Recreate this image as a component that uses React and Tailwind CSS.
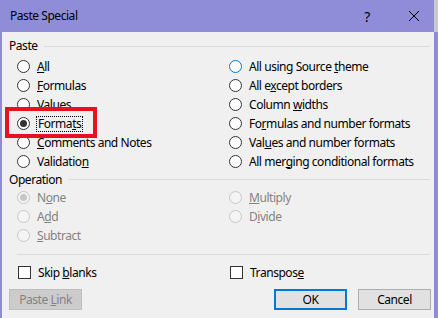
import React from 'react';

const FONT = { fontFamily: '"Noto Sans", "Segoe UI", Arial, sans-serif' };

// label with an access key; k = index of the underlined letter
const Label = ({ text, k, disabled }) => (
    <span className={disabled ? 'text-[#838383]' : 'text-black'}>
        {text.slice(0, k)}
        <span className="underline underline-offset-[1px]">{text[k]}</span>
        {text.slice(k + 1)}
    </span>
);

const Radio = ({ text, k, checked, hover, disabled, focus }) => (
    <div className="h-[19px] flex items-center">
        <span
            className={`w-[13px] h-[13px] rounded-full border flex items-center justify-center shrink-0 ${
                disabled ? 'border-[#c6c6c6] bg-[#f4f4f4]' : hover ? 'border-[#0078d7] bg-white' : 'border-[#333] bg-white'
            }`}
        >
            {checked && (
                <span className={`w-[7px] h-[7px] rounded-full ${disabled ? 'bg-[#c6c6c6]' : 'bg-[#333]'}`} />
            )}
        </span>
        <span className={`ml-[7px] ${focus ? 'outline outline-1 outline-dotted outline-black px-[1px] -ml-[1px] leading-[14px]' : ''}`}>
            <Label text={text} k={k} disabled={disabled} />
        </span>
    </div>
);

const Check = ({ text, k }) => (
    <div className="h-[19px] flex items-center">
        <span className="w-[13px] h-[13px] border border-[#333] bg-white shrink-0" />
        <span className="ml-[7px]">
            <Label text={text} k={k} />
        </span>
    </div>
);

const Header = ({ text, h }) => (
    <div className={`flex items-center pl-[7px] pr-[4px] ${h}`}>
        <span>{text}</span>
        <div className="flex-1 ml-[6px] h-px bg-[#dadada]" />
    </div>
);

export default function App() {
    return (
        <div className="w-[438px] h-[318px] bg-[#c9c9d6] flex flex-col text-[12px] tracking-[-0.45px] text-black relative overflow-hidden" style={FONT}>
            {/* title bar */}
            <div className="h-[32px] bg-[#8f8cd8] flex items-center pl-[10px] shrink-0 mr-[4px]">
                <span className="text-[12px]">Paste Special</span>
                <span className="ml-auto mr-[38px] text-[14px]">?</span>
                <svg className="w-[12px] h-[12px] mr-[14px]" viewBox="0 0 12 12" fill="none" stroke="#000" strokeWidth="1">
                    <path d="M1 1l10 10M11 1L1 11" />
                </svg>
            </div>

            <div className="flex-1 flex bg-[#8f8cd8] pl-[2px] pr-[4px]">
                <div className="flex-1 bg-[#f0f0f0] flex flex-col pt-[4px]">
                    <Header text="Paste" h="h-[20px]" />
                    <div className="grid grid-cols-[212px_1fr] pl-[15px]">
                        <div className="flex flex-col pt-[1px]">
                            <Radio text="All" k={0} />
                            <Radio text="Formulas" k={0} />
                            <Radio text="Values" k={0} />
                            <Radio text="Formats" k={5} checked focus />
                            <Radio text="Comments and Notes" k={0} />
                            <Radio text="Validation" k={9} />
                        </div>
                        <div className="flex flex-col pt-[1px]">
                            <Radio text="All using Source theme" k={17} hover />
                            <Radio text="All except borders" k={5} />
                            <Radio text="Column widths" k={7} />
                            <Radio text="Formulas and number formats" k={2} />
                            <Radio text="Values and number formats" k={3} />
                            <Radio text="All merging conditional formats" k={7} />
                        </div>
                    </div>

                    <Header text="Operation" h="h-[17px]" />
                    <div className="grid grid-cols-[212px_1fr] pl-[15px]">
                        <div className="flex flex-col">
                            <Radio text="None" k={1} checked disabled />
                            <Radio text="Add" k={1} disabled />
                            <Radio text="Subtract" k={0} disabled />
                        </div>
                        <div className="flex flex-col">
                            <Radio text="Multiply" k={0} disabled />
                            <Radio text="Divide" k={1} disabled />
                        </div>
                    </div>

                    <div className="mt-[9px] ml-[15px] mr-[4px] h-px bg-[#dadada]" />

                    <div className="grid grid-cols-[212px_1fr] pl-[16px] mt-[8px]">
                        <Check text="Skip blanks" k={5} />
                        <Check text="Transpose" k={8} />
                    </div>

                    <div className="flex items-center mt-[7px] pl-[7px] pr-[3px]">
                        <button className="w-[73px] h-[21px] border border-[#bfbfbf] bg-[#cccccc] text-[#838383]">
                            Paste <span className="underline underline-offset-[1px]">L</span>ink
                        </button>
                        <button className="ml-auto w-[73px] h-[21px] border-2 border-[#0078d7] bg-[#e1e1e1]">OK</button>
                        <button className="ml-[11px] w-[73px] h-[21px] border border-[#adadad] bg-[#e1e1e1]">Cancel</button>
                    </div>
                </div>
            </div>

            {/* red highlight drawn over the dialog */}
            <div className="absolute left-[5px] top-[107px] w-[92px] h-[31px] border-4 border-[#e81123] pointer-events-none" />
        </div>
    );
}
